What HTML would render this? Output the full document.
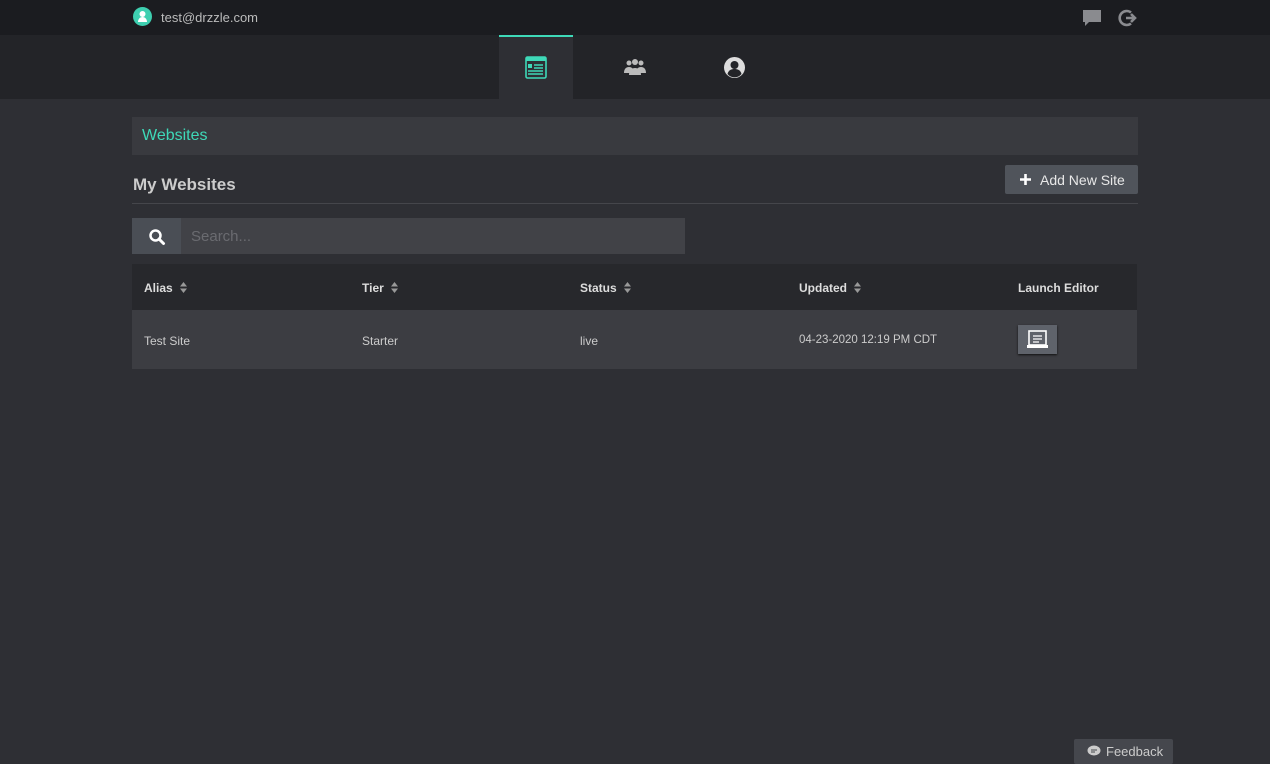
<!DOCTYPE html>
<html><head><style>
*{margin:0;padding:0;box-sizing:border-box}
body{width:1270px;height:760px;background:#2e2f34;font-family:"Liberation Sans",sans-serif;color:#ddd;position:relative;overflow:hidden}
.top{position:absolute;left:0;top:0;width:1270px;height:35px;background:#1b1c20}
.nav{position:absolute;left:0;top:35px;width:1270px;height:64px;background:#232428}
.abs{position:absolute}
.tab{position:absolute;top:35px;width:74px;height:64px}
.th,.td{position:absolute;font-size:12px}
.th{font-weight:bold;color:#ddd;top:281px}
.td{top:334px;color:#ccc}
.sort{display:inline-block;margin-left:7px;vertical-align:-1px}
</style></head><body>
<div class="top"></div>
<div class="abs" style="left:133px;top:7px;width:19px;height:19px;border-radius:50%;background:#3ecfb0">
<svg width="19" height="19" viewBox="0 0 19 19"><circle cx="9.5" cy="7" r="3" fill="#fff"/><path d="M5 15c0-3 2-5 4.5-5s4.5 2 4.5 5z" fill="#fff"/></svg></div>
<div class="abs" style="left:161px;top:10px;font-size:13px;color:#bbb">test@drzzle.com</div>
<svg class="abs" style="left:1082px;top:9px" width="20" height="18" viewBox="0 0 20 18"><path d="M1 1h18v12H7l-4 4v-4H1z" fill="#8a8b8f"/></svg>
<svg class="abs" style="left:1117px;top:8px" width="22" height="20" viewBox="0 0 22 20"><path d="M14 4.5A7 7 0 1 0 14 15.5" stroke="#8a8b8f" stroke-width="2.6" fill="none"/><path d="M9 10h8M14 6l4 4-4 4" stroke="#8a8b8f" stroke-width="2.6" fill="none"/></svg>
<div class="nav"></div>
<div class="tab" style="left:499px;background:#2e2f34;border-top:2px solid #3ed9b8"></div>
<svg class="abs" style="left:525px;top:56px" width="22" height="23" viewBox="0 0 22 23"><rect x="1" y="1" width="20" height="21" rx="1.5" fill="none" stroke="#3ed9b8" stroke-width="1.6"/><rect x="1" y="1" width="20" height="4" fill="#3ed9b8"/><rect x="3" y="8" width="4" height="4" fill="#3ed9b8"/><path d="M9 9h9M9 12h9M3 15h15M3 18h15" stroke="#3ed9b8" stroke-width="1.4"/></svg>
<svg class="abs" style="left:623px;top:58px" width="24" height="18" viewBox="0 0 24 18"><circle cx="6" cy="5" r="2.5" fill="#bbb"/><circle cx="18" cy="5" r="2.5" fill="#bbb"/><circle cx="12" cy="4" r="3" fill="#bbb"/><path d="M1 15c0-4 2-6 5-6s5 2 5 6zM13 15c0-4 2-6 5-6s5 2 5 6z" fill="#bbb"/><path d="M6 17c0-5 3-7 6-7s6 2 6 7z" fill="#bbb"/></svg>
<svg class="abs" style="left:723px;top:56px" width="23" height="23" viewBox="0 0 23 23"><circle cx="11.5" cy="11.5" r="10.5" fill="#ddd"/><circle cx="11.5" cy="9" r="4" fill="#232428"/><path d="M4.5 18c1-4 4-5 7-5s6 1 7 5a9 9 0 0 1-14 0z" fill="#232428"/></svg>

<div class="abs" style="left:132px;top:117px;width:1006px;height:38px;background:#393a3f"></div>
<div class="abs" style="left:142px;top:127px;font-size:16px;color:#3ed9b8">Websites</div>
<div class="abs" style="left:133px;top:175px;font-size:17px;font-weight:bold;color:#ccc">My Websites</div>
<div class="abs" style="left:1005px;top:165px;width:133px;height:29px;background:#50545b;border-radius:2px"></div>
<svg class="abs" style="left:1020px;top:174px" width="11" height="11" viewBox="0 0 11 11"><path d="M5.5 0v11M0 5.5h11" stroke="#fff" stroke-width="2.6"/></svg>
<div class="abs" style="left:1040px;top:172px;font-size:14px;color:#e8e8e8">Add New Site</div>
<div class="abs" style="left:132px;top:203px;width:1006px;height:1px;background:#45464b"></div>

<div class="abs" style="left:132px;top:218px;width:49px;height:36px;background:#4a4e55"></div>
<svg class="abs" style="left:148px;top:228px" width="18" height="18" viewBox="0 0 18 18"><circle cx="7.5" cy="7.5" r="5" stroke="#fff" stroke-width="2.5" fill="none"/><path d="M11 11l4.5 4.5" stroke="#fff" stroke-width="3" stroke-linecap="round"/></svg>
<div class="abs" style="left:181px;top:218px;width:504px;height:36px;background:#414247"></div>
<div class="abs" style="left:191px;top:228px;font-size:15px;color:#6a6b70">Search...</div>

<div class="abs" style="left:132px;top:264px;width:1005px;height:46px;background:#27282c"></div>
<div class="abs" style="left:132px;top:310px;width:1005px;height:59px;background:#3c3d42"></div>
<div class="th" style="left:144px">Alias<svg class="sort" width="7" height="11" viewBox="0 0 7 11"><path d="M0 4.5L3.5 0 7 4.5zM0 6.5L3.5 11 7 6.5z" fill="#999"/></svg></div>
<div class="th" style="left:362px">Tier<svg class="sort" width="7" height="11" viewBox="0 0 7 11"><path d="M0 4.5L3.5 0 7 4.5zM0 6.5L3.5 11 7 6.5z" fill="#999"/></svg></div>
<div class="th" style="left:580px">Status<svg class="sort" width="7" height="11" viewBox="0 0 7 11"><path d="M0 4.5L3.5 0 7 4.5zM0 6.5L3.5 11 7 6.5z" fill="#999"/></svg></div>
<div class="th" style="left:799px">Updated<svg class="sort" width="7" height="11" viewBox="0 0 7 11"><path d="M0 4.5L3.5 0 7 4.5zM0 6.5L3.5 11 7 6.5z" fill="#999"/></svg></div>
<div class="th" style="left:1018px">Launch Editor</div>
<div class="td" style="left:144px">Test Site</div>
<div class="td" style="left:362px">Starter</div>
<div class="td" style="left:580px">live</div>
<div class="td" style="left:799px;font-size:11.5px">04-23-2020 12:19 PM CDT</div>
<div class="abs" style="left:1018px;top:325px;width:39px;height:29px;background:#5f636b;box-shadow:0 1px 2px #111"></div>
<svg class="abs" style="left:1027px;top:330px" width="21" height="19" viewBox="0 0 21 19"><rect x="2" y="1" width="17" height="14" fill="none" stroke="#fff" stroke-width="1.6"/><path d="M6 6h9M6 9h9M6 12h6" stroke="#fff" stroke-width="1.3"/><rect x="0" y="15" width="21" height="3" fill="#fff"/></svg>

<div class="abs" style="left:1074px;top:739px;width:99px;height:25px;background:#45474d;border-radius:2px"></div>
<svg class="abs" style="left:1087px;top:745px" width="14" height="12" viewBox="0 0 14 12"><ellipse cx="7" cy="5.5" rx="6.5" ry="5" fill="#ccc"/><path d="M4 5h6M4 7h4" stroke="#45474d"/></svg>
<div class="abs" style="left:1106px;top:744px;font-size:13px;color:#ccc">Feedback</div>
</body></html>
